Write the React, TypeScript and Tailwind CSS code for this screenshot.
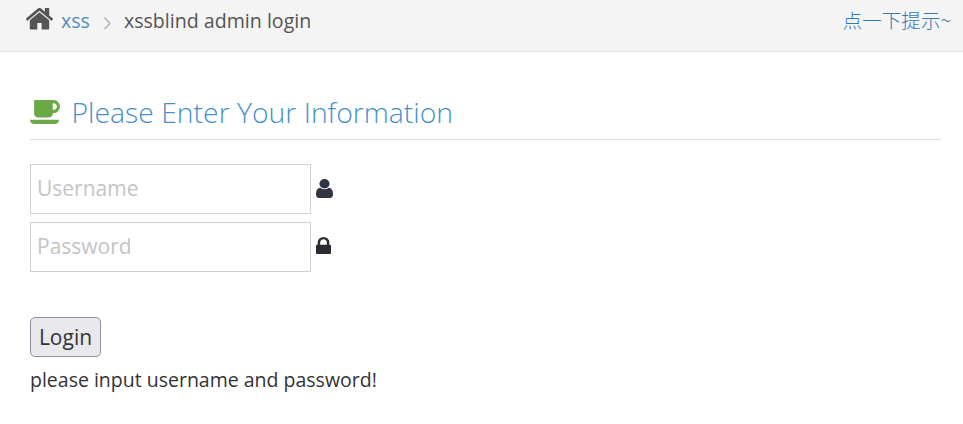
import React from "react";

const Home = () => (
  <svg viewBox="97 224 1600 1312" className="h-[23px] w-[27px] -translate-y-[3px] fill-[#555]">
    <path d="M1472 992v480q0 26-19 45t-45 19h-384v-384h-256v384h-384q-26 0-45-19t-19-45v-480q0-1 .5-3t.5-3l575-474 575 474q1 2 1 6zm223-69l-62 74q-8 9-21 11h-3q-13 0-21-7l-692-577-692 577q-12 8-24 7-13-2-21-11l-62-74q-8-10-7-23.500t11-21.500l719-599q32-26 76-26t76 26l244 204v-195q0-14 9-23t23-9h192q14 0 23 9t9 23v408l219 182q10 8 11 21.500t-7 23.500z" />
  </svg>
);

const Coffee = () => (
  <svg viewBox="0 256 1856 1408" className="h-[24px] w-[30px] shrink-0 fill-[#69aa46]" preserveAspectRatio="none">
    <path d="M1664 640q0-80-56-136t-136-56h-64v384h64q80 0 136-56t56-136zm-1664 768h1792q0 106-75 181t-181 75h-1280q-106 0-181-75t-75-181zm1856-768q0 159-112.500 271.500t-271.500 112.500h-64v32q0 92-66 158t-158 66h-704q-92 0-158-66t-66-158v-736q0-26 19-45t45-19h1152q159 0 271.500 112.500t112.500 271.500z" />
  </svg>
);

const User = () => (
  <svg viewBox="256 128 1280 1536" className="ml-[5px] h-[19px] w-[17px] -translate-y-[1px] fill-[#2f3542]" preserveAspectRatio="none">
    <path d="M1536 1399q0 109-62.500 187t-150.500 78h-854q-88 0-150.500-78t-62.500-187q0-85 8.500-160.500t31.500-152 58.500-131 94-89 134.500-34.500q131 128 313 128t313-128q76 0 134.500 34.500t94 89 58.500 131 31.500 152 8.500 160.500zm-256-887q0 159-112.500 271.500t-271.500 112.500-271.500-112.500-112.500-271.500 112.500-271.500 271.500-112.500 271.500 112.500 112.500 271.500z" />
  </svg>
);

const Lock = () => (
  <svg viewBox="320 128 1152 1408" className="ml-[5px] h-[17px] w-[15px] -translate-y-[2px] fill-[#2b2b33]" preserveAspectRatio="none">
    <path d="M640 768h512v-192q0-106-75-181t-181-75-181 75-75 181v192zm832 96v576q0 40-28 68t-68 28h-960q-40 0-68-28t-28-68v-576q0-40 28-68t68-28h32v-192q0-184 132-316t316-132 316 132 132 316v192h32q40 0 68 28t28 68z" />
  </svg>
);

export default function App() {
  return (
    <div className="min-h-[424px] bg-white font-['Open_Sans',sans-serif] text-[#333]">
      <div className="flex h-[52px] items-start justify-between border-b border-[#e5e5e5] bg-[#f4f4f4] pr-3">
        <div className="flex items-center pl-[26px] pt-[4px] text-[19.6px] leading-[34px]">
          <Home />
          <span className="ml-2 text-[#4c8fbd]">xss</span>
          <span className="ml-[13px] mr-[12px] text-[#b2b6bf]">
            <svg width="9" height="14" viewBox="0 0 9 14" className="mt-[3px]" fill="none" stroke="currentColor" strokeWidth="1.6">
              <path d="M1.5 1.5 7 7.500l-5.500 5.500" />
            </svg>
          </span>
          <span className="text-[#555]">xssblind admin login</span>
        </div>
        <a className="pt-[3px] font-['Noto_Sans_CJK_SC',sans-serif] text-[19.6px] font-light leading-[34px] text-[#337ab7]">点一下提示~</a>
      </div>
      <div className="pl-[30px] pr-[22px]">
        <div className="mt-[42px] flex h-[46px] items-center border-b border-[#dce1e6] pb-[9px]">
          <Coffee />
          <h1 className="ml-[11.500px] text-[28.350px] font-light leading-[38px] text-[#478fca]">Please Enter Your Information</h1>
        </div>
        <div className="mt-[24px] flex flex-col gap-2">
          <div className="flex items-center">
            <input placeholder="Username" className="h-[50px] w-[281px] border border-[#d0d0d0] bg-white px-[6px] pb-[2px] text-[21px] outline-none placeholder:text-[#c4c4c4]" />
            <User />
          </div>
          <div className="flex items-center">
            <input placeholder="Password" className="h-[50px] w-[281px] border border-[#d0d0d0] bg-white px-[6px] pb-[2px] text-[21px] outline-none placeholder:text-[#c4c4c4]" />
            <Lock />
          </div>
        </div>
        <button className="mt-[45px] block h-[40px] w-[71px] rounded-[5px] border border-[#8f8f9d] bg-[#e9e9ed] text-[21px] leading-[28px] text-[#333]">Login</button>
        <p className="mt-[9px] text-[19.5px] leading-[28px] text-[#333]">please input username and password!</p>
      </div>
    </div>
  );
}
